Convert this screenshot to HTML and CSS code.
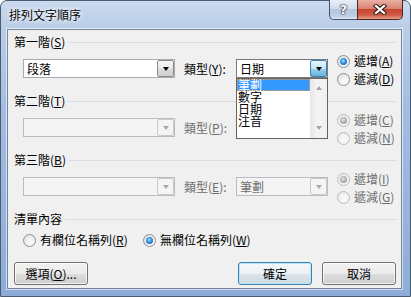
FILE: index.html
```html
<!DOCTYPE html>
<html lang="zh-Hant">
<head>
<meta charset="utf-8">
<title>排列文字順序</title>
<link rel="stylesheet" href="styles.css">
</head>
<body>
<div class="window">
  <div class="titlebar">
    <span class="title">排列文字順序</span>
    <div class="caption">
      <span class="cap-btn help">?</span>
      <span class="cap-btn close">
        <svg width="14" height="11" viewBox="0 0 14 11">
          <path d="M3 2 L11 9 M11 2 L3 9" stroke="#3a2622" stroke-width="4.4" stroke-linecap="square" fill="none"/>
          <path d="M3 2 L11 9 M11 2 L3 9" stroke="#fff" stroke-width="2.2" stroke-linecap="square" fill="none"/>
        </svg>
      </span>
    </div>
  </div>

  <div class="client">
    <div class="group">
      <div class="group-label"><span>第一階(<u>S</u>)</span><i class="rule"></i></div>
      <div class="sort-row">
        <div class="fields">
          <div class="combo wide"><span class="combo-text">段落</span><span class="combo-btn"><b class="arrow"></b></span></div>
          <span class="type-label">類型(<u>Y</u>):</span>
          <div class="combo narrow open">
            <span class="combo-text">日期</span><span class="combo-btn"><b class="arrow"></b></span>
            <div class="droplist">
              <ul>
                <li class="sel">筆劃</li>
                <li>數字</li>
                <li>日期</li>
                <li>注音</li>
              </ul>
              <div class="vscroll"><b class="sarrow up"></b><b class="sarrow down"></b></div>
            </div>
          </div>
        </div>
        <div class="radios">
          <label class="radio"><span class="dot checked"></span><span class="txt">遞增(<u>A</u>)</span></label>
          <label class="radio"><span class="dot"></span><span class="txt">遞減(<u>D</u>)</span></label>
        </div>
      </div>
    </div>

    <div class="group">
      <div class="group-label"><span>第二階(<u>T</u>)</span><i class="rule"></i></div>
      <div class="sort-row off">
        <div class="fields">
          <div class="combo wide"><span class="combo-text"></span><span class="combo-btn"><b class="arrow"></b></span></div>
          <span class="type-label">類型(<u>P</u>):</span>
          <div class="combo narrow"><span class="combo-text"></span><span class="combo-btn"><b class="arrow"></b></span></div>
        </div>
        <div class="radios">
          <label class="radio"><span class="dot checked"></span><span class="txt">遞增(<u>C</u>)</span></label>
          <label class="radio"><span class="dot"></span><span class="txt">遞減(<u>N</u>)</span></label>
        </div>
      </div>
    </div>

    <div class="group">
      <div class="group-label"><span>第三階(<u>B</u>)</span><i class="rule"></i></div>
      <div class="sort-row off">
        <div class="fields">
          <div class="combo wide"><span class="combo-text"></span><span class="combo-btn"><b class="arrow"></b></span></div>
          <span class="type-label">類型(<u>E</u>):</span>
          <div class="combo narrow"><span class="combo-text">筆劃</span><span class="combo-btn"><b class="arrow"></b></span></div>
        </div>
        <div class="radios">
          <label class="radio"><span class="dot checked"></span><span class="txt">遞增(<u>I</u>)</span></label>
          <label class="radio"><span class="dot"></span><span class="txt">遞減(<u>G</u>)</span></label>
        </div>
      </div>
    </div>

    <div class="group list-group">
      <div class="group-label"><span>清單內容</span><i class="rule"></i></div>
      <div class="header-row">
        <label class="radio first"><span class="dot"></span><span class="txt">有欄位名稱列(<u>R</u>)</span></label>
        <label class="radio"><span class="dot checked"></span><span class="txt">無欄位名稱列(<u>W</u>)</span></label>
      </div>
    </div>

    <div class="buttons">
      <button class="btn">選項(<u>O</u>)...</button>
      <span class="spacer"></span>
      <button class="btn default">確定</button>
      <button class="btn">取消</button>
    </div>
  </div>
</div>
</body>
</html>
```

FILE: styles.css
```css
* {
    box-sizing: border-box;
    margin: 0;
    padding: 0;
}

body {
    width: 411px;
    height: 297px;
    overflow: hidden;
    background: #fff;
    color: #000;
    font: 12px/14px "Noto Sans CJK TC", "Liberation Sans", sans-serif;
}

u {
    text-decoration: underline;
    text-underline-offset: 1px;
}

/* window frame */
.window {
    width: 411px;
    height: 297px;
    display: flex;
    flex-direction: column;
    border: 1px solid #4b5b72;
    border-radius: 7px 7px 0 0;
    background: linear-gradient(to bottom, #cbdaee 0, #b9cde8 28px, #a3bde2 110px, #8dacd9 297px);
}

.titlebar {
    height: 28px;
    display: flex;
    align-items: flex-start;
    padding-left: 8px;
}

.title {
    margin-top: 7px;
    text-shadow: 0 0 6px #fff, 0 0 3px #fff;
}

.caption {
    display: flex;
    margin-left: auto;
    margin-right: 7px;
    margin-top: -1px;
}

.cap-btn {
    height: 20px;
    display: flex;
    align-items: center;
    justify-content: center;
}

.help {
    width: 28px;
    border: 1px solid #42546d;
    border-right: none;
    border-top: none;
    border-radius: 0 0 0 5px;
    background: linear-gradient(to bottom, #e8eef6 0, #d2ddeb 45%, #b5c6dd 50%, #bfcfe4 85%, #dfe8f3 100%);
    color: #fff;
    font: bold 13px/1 "DejaVu Sans", sans-serif;
    text-shadow: 0 0 1px #223, 0 0 1px #223, 0 0 2px #223;
}

.close {
    width: 46px;
    border: 1px solid #4e2620;
    border-top: none;
    border-radius: 0 0 5px 0;
    background: linear-gradient(to bottom, #eab0a3 0, #d98270 45%, #c7452f 50%, #cf5c45 80%, #e7a08d 100%);
}

/* client area */
.client {
    flex: 1;
    margin: 0 8px 7px 6px;
    border: 1px solid #74849a;
    box-shadow: 0 0 0 1px rgba(255, 255, 255, 0.6);
    background: #f0f0f0;
    padding-top: 5px;
    display: flex;
    flex-direction: column;
}

.group {
    height: 59px;
}

.group-label {
    display: flex;
    align-items: center;
    height: 14px;
    padding: 0 4px 0 6px;
    white-space: nowrap;
}

.rule {
    flex: 1;
    height: 1px;
    margin-left: 3px;
    background: #d5dfe5;
}

.sort-row {
    display: flex;
    align-items: flex-start;
    margin-top: 3px;
    padding-left: 15px;
}

.fields {
    display: flex;
    align-items: center;
    margin-top: 7px;
}

.type-label {
    width: 52px;
    margin-left: 9px;
    white-space: nowrap;
}

.off .type-label,
.off .radio {
    color: #6d6d6d;
}

/* combo boxes */
.combo {
    position: relative;
    display: flex;
    height: 19px;
    border: 1px solid #a5acb5;
    background: #fff;
}

.wide {
    width: 152px;
}

.narrow {
    width: 92px;
}

.combo-text {
    flex: 1;
    padding-left: 3px;
    line-height: 17px;
}

.combo-btn {
    width: 17px;
    display: flex;
    align-items: center;
    justify-content: center;
    border: 1px solid #8a8a8a;
    border-radius: 2px;
    background: linear-gradient(to bottom, #f6f6f6 0, #e9e9e9 50%, #dcdcdc 51%, #d0d0d0 100%);
}

.arrow {
    width: 1px;
    border-style: solid;
    border-width: 4px 3px 0;
    border-color: #000 transparent transparent;
}

.open {
    border-color: #7a7a7a;
}

.open .combo-btn {
    border-color: #3c7fb1;
    background: linear-gradient(to bottom, #e5f4fc 0, #c4e5f6 50%, #98d1ef 51%, #68b3db 100%);
}

.off .combo {
    border-color: #b9bdc2;
    background: #f4f4f4;
    color: #6d6d6d;
}

.off .combo-btn {
    border-color: #c9c9c9;
    background: #f4f4f4;
}

.off .arrow {
    border-top-color: #a8a8a8;
}

/* open list */
.droplist {
    position: absolute;
    top: 18px;
    left: -1px;
    width: 92px;
    height: 61px;
    display: flex;
    border: 1px solid #646464;
    background: #fff;
    z-index: 5;
    color: #000;
}

.droplist ul {
    flex: 1;
    list-style: none;
}

.droplist li {
    height: 12px;
    line-height: 12px;
    padding-left: 1px;
}

.droplist .sel {
    background: #3399ff;
    color: #fff;
    outline: 1px dotted #ff9a3c;
    outline-offset: -1px;
}

.vscroll {
    width: 17px;
    display: flex;
    flex-direction: column;
    justify-content: space-between;
    align-items: center;
    padding: 7px 0 8px;
    background: linear-gradient(to right, #e6e6e6 0, #f4f4f4 40%, #f0f0f0 100%);
}

.sarrow {
    width: 1px;
    border-style: solid;
    border-color: transparent;
}

.sarrow.up {
    border-width: 0 3px 4px;
    border-bottom-color: #a6a6a6;
}

.sarrow.down {
    border-width: 4px 3px 0;
    border-top-color: #a6a6a6;
}

/* radio buttons */
.radios {
    margin-left: 9px;
}

.radio {
    display: flex;
    align-items: center;
    height: 18px;
    gap: 4px;
    white-space: nowrap;
}

.dot {
    position: relative;
    flex: none;
    width: 13px;
    height: 13px;
    border-radius: 50%;
    border: 1px solid #8e8f8f;
    background: radial-gradient(circle at 60% 65%, #ffffff 0, #f4f4f4 35%, #d6d6d6 100%);
}

.dot.checked::after {
    content: "";
    position: absolute;
    left: 2px;
    top: 2px;
    width: 7px;
    height: 7px;
    border-radius: 50%;
    background: radial-gradient(circle at 45% 40%, #a8e2ff 0, #3a97e4 40%, #0e4f98 100%);
}

.off .dot {
    border-color: #bcbcbc;
    background: radial-gradient(circle at 60% 65%, #fbfbfb 0, #f2f2f2 50%, #e2e2e2 100%);
}

.off .dot.checked::after {
    background: radial-gradient(circle at 45% 40%, #e6e6e6 0, #b0b0b0 50%, #8a8a8a 100%);
}

.header-row {
    display: flex;
    margin-top: 5px;
    padding-left: 15px;
}

.radio.first {
    width: 120px;
}

.list-group {
    height: auto;
}

/* buttons */
.buttons {
    display: flex;
    gap: 10px;
    margin-top: 13px;
    padding: 0 5px 0 6px;
}

.spacer {
    flex: 1;
}

.btn {
    width: 74px;
    height: 23px;
    border: 1px solid #707070;
    border-radius: 3px;
    background: linear-gradient(to bottom, #f2f2f2 0, #ebebeb 50%, #dddddd 51%, #cfcfcf 100%);
    box-shadow: inset 0 0 0 1px rgba(255, 255, 255, 0.75);
    font: inherit;
    color: #000;
    line-height: 19px;
    text-align: center;
}

.btn.default {
    border-color: #3c7fb1;
    box-shadow: inset 0 0 0 1px #b8e4fa;
    background: linear-gradient(to bottom, #f4f8fb 0, #ebf1f5 50%, #dbe4ea 51%, #cfdbe3 100%);
}
```
